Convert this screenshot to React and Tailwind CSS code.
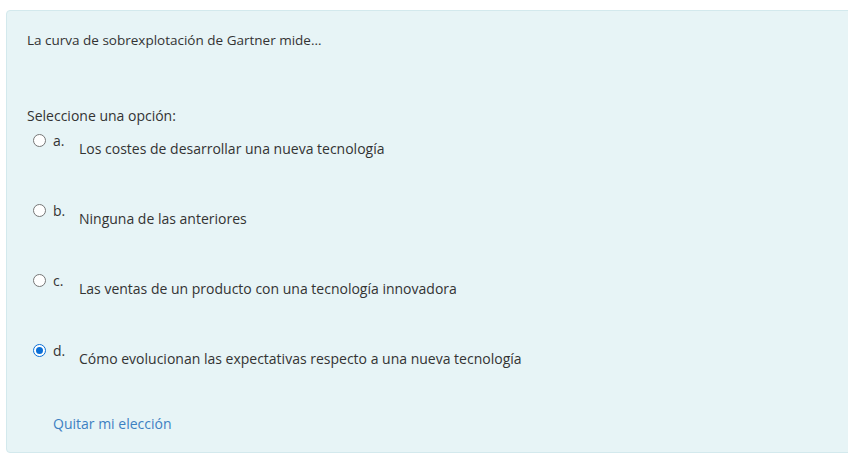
import React from "react";

const options = [
  { l: "a.", t: "Los costes de desarrollar una nueva tecnología", c: false },
  { l: "b.", t: "Ninguna de las anteriores", c: false },
  { l: "c.", t: "Las ventas de un producto con una tecnología innovadora", c: false },
  { l: "d.", t: "Cómo evolucionan las expectativas respecto a una nueva tecnología", c: true },
];

function Radio({ checked }) {
  return checked ? (
    <div className="w-[13px] h-[13px] rounded-full border-[1.5px] border-[#0b6fd6] bg-white flex items-center justify-center shrink-0">
      <div className="w-[7px] h-[7px] rounded-full bg-[#0b6fd6]" />
    </div>
  ) : (
    <div className="w-[13px] h-[13px] rounded-full border border-[#767676] bg-white shrink-0" />
  );
}

export default function App() {
  return (
    <div className="w-[848px] h-[465px] bg-white overflow-hidden pt-[10px] pl-[6px]" style={{ fontFamily: '"Open Sans", "Noto Sans", sans-serif' }}>
      <div className="w-[860px] h-[443px] bg-[#e7f4f6] border border-[#d3e9ed] rounded-[4px] pl-[20px] pt-[19px] text-[14px] leading-[21px] text-[#333]">
        <div className="text-[13.5px]">La curva de sobrexplotación de Gartner mide…</div>
        <div className="mt-[54px]">Seleccione una opción:</div>
        <div className="mt-[4px] flex flex-col gap-[41px]">
          {options.map((o) => (
            <div key={o.l} className="flex items-start">
              <div className="w-[26px] pl-[6px] pt-[4px]">
                <Radio checked={o.c} />
              </div>
              <div className="w-[26px]">{o.l}</div>
              <div className="pt-[8px]">{o.t}</div>
            </div>
          ))}
        </div>
        <div className="mt-[44px] pl-[26px] text-[#3d80c2]">Quitar mi elección</div>
      </div>
    </div>
  );
}
